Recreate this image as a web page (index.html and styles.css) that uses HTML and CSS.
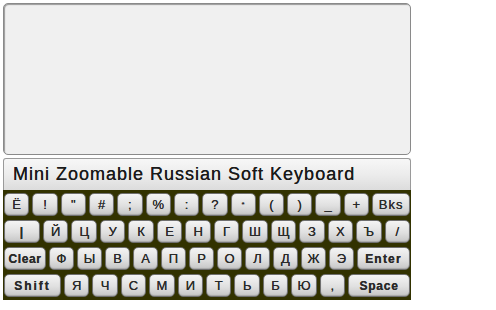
FILE: index.html
```html
<!DOCTYPE html>
<html>
    <head>
        <meta charset="utf-8">
        <title>Mini Zoomable Russian Soft Keyboard</title>
        <link rel="stylesheet" href="styles.css">
    </head>
    <body>
        <div id="container">
            <textarea id="output"></textarea>
            <div id="titleBar">Mini Zoomable Russian Soft Keyboard</div>
            <div id="keyboard">
                <div class="row">
                    <span class="key">Ё</span>
                    <span class="key">!</span>
                    <span class="key">"</span>
                    <span class="key">#</span>
                    <span class="key">;</span>
                    <span class="key">%</span>
                    <span class="key">:</span>
                    <span class="key">?</span>
                    <span class="key small">*</span>
                    <span class="key">(</span>
                    <span class="key">)</span>
                    <span class="key">_</span>
                    <span class="key">+</span>
                    <span class="key wide bks">Bks</span>
                </div>
                <div class="row">
                    <span class="key wide bar">|</span>
                    <span class="key">Й</span>
                    <span class="key">Ц</span>
                    <span class="key">У</span>
                    <span class="key">К</span>
                    <span class="key">Е</span>
                    <span class="key">Н</span>
                    <span class="key">Г</span>
                    <span class="key">Ш</span>
                    <span class="key">Щ</span>
                    <span class="key">З</span>
                    <span class="key">Х</span>
                    <span class="key">Ъ</span>
                    <span class="key">/</span>
                </div>
                <div class="row">
                    <span class="key wide clear">Clear</span>
                    <span class="key">Ф</span>
                    <span class="key">Ы</span>
                    <span class="key">В</span>
                    <span class="key">А</span>
                    <span class="key">П</span>
                    <span class="key">Р</span>
                    <span class="key">О</span>
                    <span class="key">Л</span>
                    <span class="key">Д</span>
                    <span class="key">Ж</span>
                    <span class="key">Э</span>
                    <span class="key wide enter">Enter</span>
                </div>
                <div class="row">
                    <span class="key wide shift">Shift</span>
                    <span class="key">Я</span>
                    <span class="key">Ч</span>
                    <span class="key">С</span>
                    <span class="key">М</span>
                    <span class="key">И</span>
                    <span class="key">Т</span>
                    <span class="key">Ь</span>
                    <span class="key">Б</span>
                    <span class="key">Ю</span>
                    <span class="key">,</span>
                    <span class="key wide space">Space</span>
                </div>
            </div>
        </div>
    </body>
</html>
```

FILE: styles.css
```css
body {
    margin: 0;
    padding: 3px;
    font-family: "Liberation Sans", Arial, sans-serif;
    background-color: white;
}

#container {
    width: 408px;
}

#output {
    display: block;
    box-sizing: border-box;
    width: 408px;
    height: 152px;
    margin: 0;
    resize: none;
    background-color: #f0f0f0;
    border: 1px solid #8a8a8a;
    border-radius: 5px;
    box-shadow: inset 1px 1px 1px #9a9a9a;
}

#titleBar {
    box-sizing: border-box;
    height: 32px;
    margin-top: 3px;
    padding-left: 9px;
    line-height: 31px;
    font-size: 18px;
    letter-spacing: 1px;
    color: #1a1a1a;
    text-shadow: 0 0 0.6px #1a1a1a;
    border: 1px solid #9a9a9a;
    border-bottom: none;
    border-radius: 3px 3px 0 0;
    background: linear-gradient(#f7f7f7, #ececec 50%, #dcdcdc);
}

#keyboard {
    box-sizing: border-box;
    height: 110px;
    padding: 3px 1px 3px 1px;
    background-color: #323200;
    display: flex;
    flex-direction: column;
    gap: 4px;
}

.row {
    display: flex;
    gap: 3px;
    height: 23px;
}

.key {
    flex: 1 1 0;
    box-sizing: border-box;
    display: flex;
    align-items: center;
    justify-content: center;
    font-size: 13px;
    color: #2a2a2a;
    text-shadow: 0 0 0.5px #2a2a2a;
    border: 1px solid #6f6f6f;
    border-radius: 5px;
    background: linear-gradient(#f4f4f4, #e0e0e0 55%, #c6c6c6);
    box-shadow: inset 0 -1px 1px #a8a8a8;
}

.wide {
    flex: none;
    font-size: 12px;
    font-weight: bold;
    letter-spacing: 1.2px;
}

.bks { width: 38px; font-weight: normal; font-size: 13px; letter-spacing: 1px; }
.bar { width: 36px; }
.clear { width: 42px; letter-spacing: 0.6px; }
.enter { width: 53px; }
.shift { width: 57px; letter-spacing: 2px; }
.space { width: 62px; letter-spacing: 0.8px; }
.small { font-size: 8px; }
```
